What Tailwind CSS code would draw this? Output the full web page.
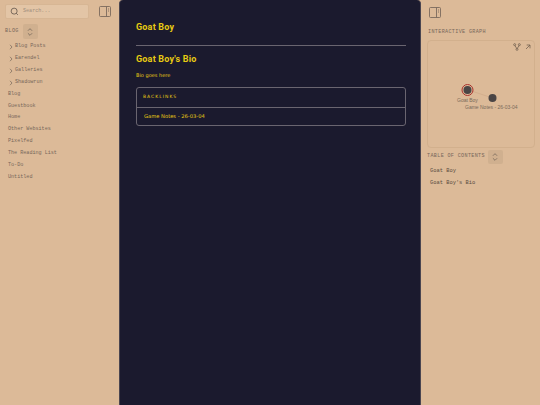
<!DOCTYPE html>
<html lang="en">
<head>
<meta charset="UTF-8">
<title>Goat Boy</title>
<script src="https://cdn.jsdelivr.net/npm/@tailwindcss/browser@4"></script>
</head>
<body class="bg-[#dcba98]">
<div class="flex h-[405px] w-[540px] overflow-hidden font-['Liberation_Mono',monospace] text-[5.1px] text-[#77675a]">

  <!-- left sidebar -->
  <aside class="w-[119px] shrink-0 pl-[5px] pr-[8px] pt-[4px]">
    <div class="flex items-center justify-between">
      <div class="flex h-[15px] w-[84px] items-center gap-[4px] rounded-[2px] border border-[#d7b694] bg-[#e3c5a6] px-[4px]">
        <svg class="h-[9px] w-[9px]" viewBox="0 0 24 24" fill="none" stroke="#5a4e45" stroke-width="2"><circle cx="11" cy="11" r="8"/><path d="m21 21-4.3-4.3"/></svg>
        <span class="text-[#a08e7c]">Search...</span>
      </div>
      <svg class="h-[11px] w-[12px]" viewBox="0 0 12 11" fill="none" stroke="#7a6a5c" stroke-width=".9"><rect x=".5" y=".5" width="11" height="10" rx="1"/><path d="M7.5 .5v10M9 3h1M9 5h1"/></svg>
    </div>
    <div class="mt-[5px] flex items-center gap-[4px]">
      <span class="tracking-[0.4px]">BLOG</span>
      <div class="flex h-[15px] w-[15px] items-center justify-center rounded-[2px] bg-[#d0b08f]">
        <svg class="h-[10px] w-[10px]" viewBox="0 0 24 24" fill="none" stroke="#7a6a5c" stroke-width="2"><path d="m7 9 5-5 5 5M7 15l5 5 5-5"/></svg>
      </div>
    </div>
    <ul class="mt-[2px] flex flex-col">
      <li class="flex h-[11.9px] items-center gap-[2px] pl-[4px]"><svg class="h-[6px] w-[4px]" viewBox="0 0 4 6" fill="none" stroke="#77675a" stroke-width=".7"><path d="m1 .8 2 2.2-2 2.2"/></svg>Blog Posts</li>
      <li class="flex h-[11.9px] items-center gap-[2px] pl-[4px]"><svg class="h-[6px] w-[4px]" viewBox="0 0 4 6" fill="none" stroke="#77675a" stroke-width=".7"><path d="m1 .8 2 2.2-2 2.2"/></svg>Earendel</li>
      <li class="flex h-[11.9px] items-center gap-[2px] pl-[4px]"><svg class="h-[6px] w-[4px]" viewBox="0 0 4 6" fill="none" stroke="#77675a" stroke-width=".7"><path d="m1 .8 2 2.2-2 2.2"/></svg>Galleries</li>
      <li class="flex h-[11.9px] items-center gap-[2px] pl-[4px]"><svg class="h-[6px] w-[4px]" viewBox="0 0 4 6" fill="none" stroke="#77675a" stroke-width=".7"><path d="m1 .8 2 2.2-2 2.2"/></svg>Shadowrun</li>
      <li class="flex h-[11.9px] items-center pl-[3px]">Blog</li>
      <li class="flex h-[11.9px] items-center pl-[3px]">Guestbook</li>
      <li class="flex h-[11.9px] items-center pl-[3px]">Home</li>
      <li class="flex h-[11.9px] items-center pl-[3px]">Other Websites</li>
      <li class="flex h-[11.9px] items-center pl-[3px]">Pixelfed</li>
      <li class="flex h-[11.9px] items-center pl-[3px]">The Reading List</li>
      <li class="flex h-[11.9px] items-center pl-[3px]">To-Do</li>
      <li class="flex h-[11.9px] items-center pl-[3px]">Untitled</li>
    </ul>
  </aside>

  <!-- main column -->
  <main class="w-[302px] shrink-0 rounded-t-[4px] border-x border-[#4a4550] bg-[#1b1a2e] pl-[16px] pr-[14px] pt-[21px] font-['DejaVu_Sans',sans-serif] text-[#e8ca12]">
    <h1 class="font-['Roboto',sans-serif] text-[9px] font-bold leading-[12px] tracking-[0.2px]">Goat Boy</h1>
    <hr class="mt-[12px] border-[#6a6570]">
    <h2 class="mt-[7px] font-['Roboto',sans-serif] text-[9px] font-bold leading-[12px] tracking-[0.2px]">Goat Boy's Bio</h2>
    <p class="mt-[6px] text-[5px] leading-[9px]">Bio goes here</p>
    <div class="mt-[7px] rounded-[3px] border border-[#6a6570] text-[5.2px]">
      <div class="flex h-[20px] items-center border-b border-[#6a6570] pl-[6px] text-[4.5px] tracking-[1px]">BACKLINKS</div>
      <div class="flex h-[17px] items-center pl-[7px]">Game Notes - 26-03-04</div>
    </div>
  </main>

  <!-- right sidebar -->
  <aside class="min-w-0 flex-1 pl-[6px] pr-[5px] pt-[7px]">
    <svg class="ml-[2px] h-[11px] w-[12px]" viewBox="0 0 12 11" fill="none" stroke="#7a6a5c" stroke-width=".9"><rect x=".5" y=".5" width="11" height="10" rx="1"/><path d="M7.5 .5v10M9 3h1M9 5h1"/></svg>
    <div class="mt-[10px] pl-px text-[5.1px] leading-[8px] tracking-[0.35px]">INTERACTIVE GRAPH</div>
    <div class="relative mt-[4px] h-[108px] rounded-[4px] border border-[#d2b08d]">
      <svg class="absolute right-[13px] top-[2px] h-[8px] w-[8px]" viewBox="0 0 24 24" fill="none" stroke="#6b5a4c" stroke-width="2.2"><circle cx="5" cy="5" r="3"/><circle cx="19" cy="5" r="3"/><circle cx="12" cy="19" r="3"/><path d="m6 8 5 8M18 8l-5 8"/></svg>
      <svg class="absolute right-[2px] top-[2px] h-[8px] w-[8px]" viewBox="0 0 24 24" fill="none" stroke="#6b5a4c" stroke-width="2.2"><path d="M6 18 18 6M8 6h10v10"/></svg>
      <svg class="absolute left-0 top-0 h-full w-full" viewBox="0 0 105 106" fill="none">
        <path d="M40 49 64 57" stroke="#cfa98a" stroke-width=".7"/>
        <circle cx="39" cy="49" r="5.5" stroke="#a8322e"/>
        <circle cx="39" cy="49" r="4" fill="#4a4545"/>
        <circle cx="64" cy="57" r="4" fill="#4a4545"/>
      </svg>
      <span class="absolute left-[29px] top-[56px] font-['Liberation_Sans',sans-serif] text-[5px] leading-[7px] text-[#7a6a5a]">Goat Boy</span>
      <span class="absolute left-[37px] top-[63px] whitespace-nowrap font-['Liberation_Sans',sans-serif] text-[5px] leading-[7px] text-[#7a6a5a]">Game Notes - 26-03-04</span>
    </div>
    <div class="mt-[2px] flex items-center gap-[3px]">
      <span class="tracking-[0.35px]">TABLE OF CONTENTS</span>
      <div class="flex h-[14px] w-[15px] items-center justify-center rounded-[2px] bg-[#d0b08f]">
        <svg class="h-[10px] w-[10px]" viewBox="0 0 24 24" fill="none" stroke="#7a6a5c" stroke-width="2"><path d="m7 9 5-5 5 5M7 15l5 5 5-5"/></svg>
      </div>
    </div>
    <ul class="mt-px pl-[3px] text-[5.4px] text-[#5a4d42]">
      <li class="flex h-[12px] items-center">Goat Boy</li>
      <li class="flex h-[12px] items-center">Goat Boy's Bio</li>
    </ul>
  </aside>
</div>
</body>
</html>
